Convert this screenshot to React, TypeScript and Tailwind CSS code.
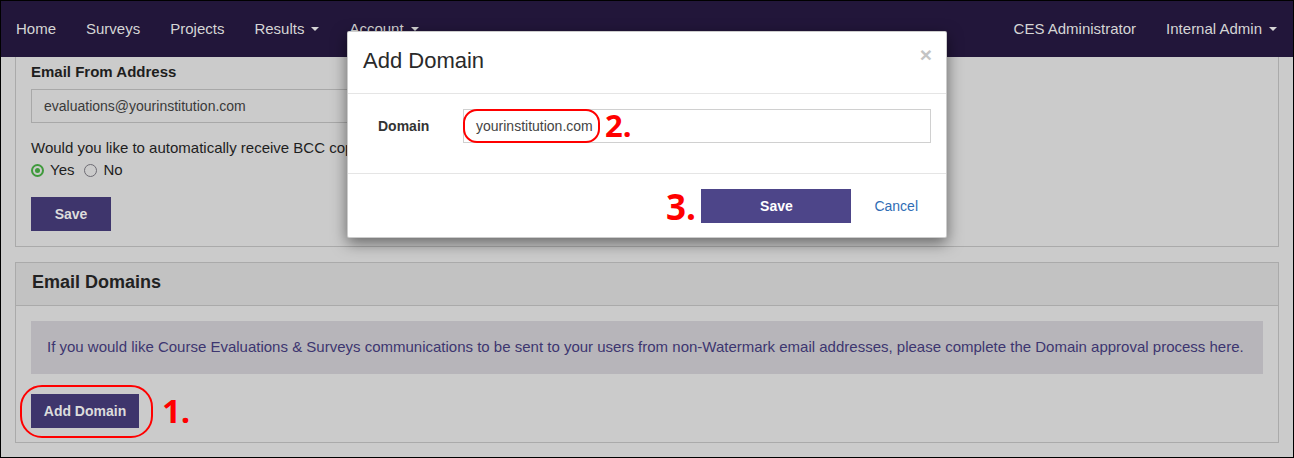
import React from 'react';

const navLeft = ['Home', 'Surveys', 'Projects', 'Results', 'Account'];
const withCaret = ['Results', 'Account'];

const Caret: React.FC<{ color?: string }> = ({ color = 'border-t-[#d5d5d5]' }) => (
  <span className={`ml-[7px] inline-block w-0 h-0 border-x-[4px] border-x-transparent border-t-[4px] ${color}`} />
);

const Radio: React.FC<{ checked?: boolean; label: string }> = ({ checked, label }) => (
  <label className="flex items-center gap-[6px]">
    {checked ? (
      <span className="w-[13px] h-[13px] rounded-full border-[2px] border-[#3f9a3c] flex items-center justify-center">
        <span className="w-[5px] h-[5px] rounded-full bg-[#3f9a3c]" />
      </span>
    ) : (
      <span className="w-[13px] h-[13px] rounded-full border-[1.5px] border-[#6d6b73]" />
    )}
    <span>{label}</span>
  </label>
);

const Mark: React.FC<{ n: string; size: string }> = ({ n, size }) => (
  <span
    className={`absolute font-bold text-[#ff0000] leading-none ${size}`}
    style={{ fontFamily: '"Open Sans", "Liberation Sans", sans-serif' }}
  >
    {n}
  </span>
);

export default function App() {
  return (
    <div className="relative w-[1294px] h-[458px] overflow-hidden border border-black bg-[#cbcbcb] font-['Liberation_Sans',Arial,sans-serif] text-[14px] text-[#1e1e1e]">
      {/* navbar */}
      <nav className="h-[56px] bg-[#22163a] flex items-center justify-between text-[15px] text-[#d5d5d5]">
        <ul className="flex">
          {navLeft.map((item) => (
            <li key={item} className="px-[15px] flex items-center">
              {item}
              {withCaret.includes(item) && <Caret />}
            </li>
          ))}
        </ul>
        <ul className="flex">
          <li className="px-[15px]">CES Administrator</li>
          <li className="pl-[15px] pr-[16px] flex items-center">
            Internal Admin
            <Caret />
          </li>
        </ul>
      </nav>

      <div className="mx-[14px]">
        {/* email from panel */}
        <div className="border-x border-b border-[#aaaaaa] px-[15px] pt-[5px] pb-[15px] text-[15px]">
          <div className="h-[20px] leading-[20px] font-bold">Email From Address</div>
          <div className="mt-[7px] h-[34px] w-[600px] border border-[#a8a8a8] flex items-center px-[12px] text-[14px] text-[#3a3a3a]">
            evaluations@yourinstitution.com
          </div>
          <p className="mt-[15px] h-[20px] leading-[20px]">
            Would you like to automatically receive BCC copies of all emails sent from the system?
          </p>
          <div className="mt-[2px] h-[20px] flex items-center gap-[10px]">
            <Radio checked label="Yes" />
            <Radio label="No" />
          </div>
          <button className="mt-[17px] h-[34px] w-[80px] bg-[#3e356c] text-[14px] text-[#dcdcdc] font-bold">Save</button>
        </div>

        {/* email domains panel */}
        <div className="mt-[15px] border border-[#aaaaaa]">
          <div className="h-[43px] bg-[#c2c2c2] border-b border-[#aaaaaa] flex items-center px-[16px] pb-[4px] text-[18px] font-bold text-[#222]">
            Email Domains
          </div>
          <div className="px-[15px] pt-[15px] pb-[14px]">
            <div className="h-[53px] bg-[#b7b5ba] flex items-center px-[16px] text-[15px] text-[#3d3670]">
              If you would like Course Evaluations &amp; Surveys communications to be sent to your users from non-Watermark email addresses, please complete the Domain approval process here.
            </div>
            <button className="mt-[20px] h-[34px] w-[108px] bg-[#3e356c] text-[#dcdcdc] font-bold">Add Domain</button>
          </div>
        </div>
      </div>

      {/* annotation 1 */}
      <div className="absolute left-[19px] top-[384px] w-[133px] h-[53px] rounded-[22px] border-[2px] border-[#ff0000]" />
      <Mark n="1." size="text-[33px] left-[161px] top-[393px]" />

      {/* modal */}
      <div className="absolute left-[346px] top-[30px] w-[600px] bg-white border border-black/20 rounded-[2px] shadow-[0_5px_15px_rgba(0,0,0,0.5)]">
        <div className="relative h-[62px] border-b border-[#e5e5e5] flex items-center px-[15px]">
          <h4 className="text-[22px] text-[#2a2a2a] pb-[4px]">Add Domain</h4>
          <span className="absolute right-[14px] top-[12px] text-[21px] font-bold text-[#c4c4c4] leading-none">×</span>
        </div>
        <div className="h-[79px] px-[15px] pt-[15px] flex items-start">
          <label className="w-[100px] h-[34px] pl-[15px] flex items-center font-bold text-[#333]">Domain</label>
          <div className="relative flex-1 h-[34px] border border-[#d0d0d0] flex items-center px-[12px] text-[#444]">
            yourinstitution.com
            <div className="absolute left-[-1px] top-[-1px] w-[137px] h-[34px] rounded-[14px] border-[2px] border-[#ff0000]" />
            <Mark n="2." size="text-[31px] left-[141px] top-[0px]" />
          </div>
        </div>
        <div className="relative h-[64px] border-t border-[#e5e5e5] flex items-start justify-end pt-[15px] pr-[28px] gap-[23px]">
          <Mark n="3." size="text-[35px] left-[318px] top-[15px]" />
          <button className="h-[34px] w-[150px] bg-[#4d4589] text-white font-bold">Save</button>
          <span className="h-[34px] flex items-center text-[#2f6db5]">Cancel</span>
        </div>
      </div>
    </div>
  );
}
